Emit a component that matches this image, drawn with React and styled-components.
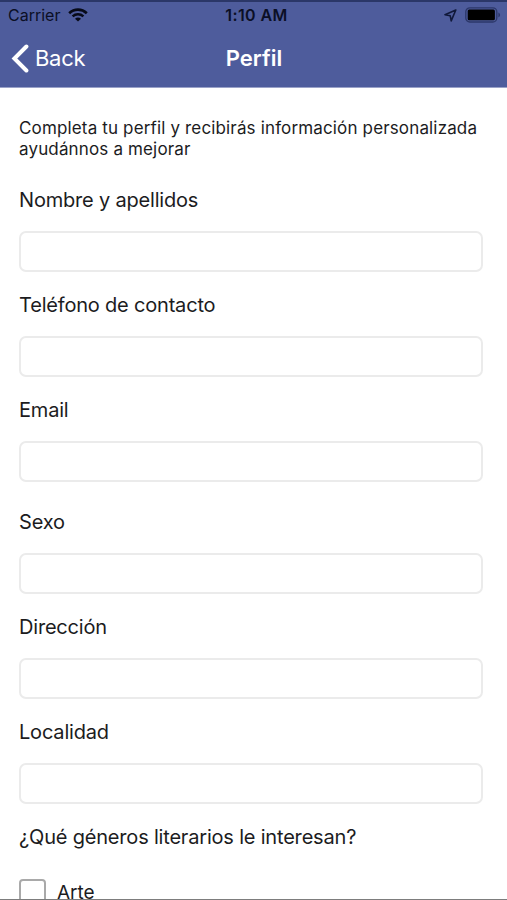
import React from 'react';
import styled, { createGlobalStyle } from 'styled-components';

const GlobalStyle = createGlobalStyle`
  body {
    margin: 0;
    background: #fff;
    font-family: Inter, 'Liberation Sans', sans-serif;
    color: #1c1c1e;
  }
`;

const Screen = styled.div`
  box-sizing: border-box;
  width: 507px;
  height: 900px;
  overflow: hidden;
  border-bottom: 1px solid #7d7d7d;
`;

const Header = styled.header`
  box-sizing: border-box;
  height: 88px;
  background-color: #4e5c9c;
  border-top: 2px solid #2b3768;
  border-bottom: 1px solid #9aa2c8;
`;

const StatusBar = styled.div`
  display: grid;
  grid-template-columns: 1fr auto 1fr;
  align-items: center;
  height: 26px;
  padding: 0 6px 0 8px;
  color: #0b0f25;
`;

const StatusGroup = styled.div`
  display: flex;
  align-items: center;
  justify-content: ${(props) => (props.$end ? 'flex-end' : 'flex-start')};
  gap: 8px;
`;

const Carrier = styled.span`
  font-size: 16px;
`;

const Time = styled.span`
  padding-left: 4px;
  font-size: 16px;
  font-weight: 600;
  letter-spacing: 0.4px;
`;

const NavBar = styled.nav`
  display: grid;
  grid-template-columns: 1fr auto 1fr;
  align-items: center;
  height: 60px;
  padding: 0 10px 0 11px;
  color: #fff;
`;

const BackButton = styled.button`
  display: flex;
  align-items: center;
  gap: 6px;
  padding: 0;
  border: 0;
  background: none;
  color: inherit;
  font: inherit;
  font-size: 22px;
  line-height: 28px;
  letter-spacing: -0.3px;
`;

const Title = styled.h1`
  margin: 0;
  font-size: 22px;
  font-weight: 600;
  line-height: 28px;
`;

const Form = styled.form`
  padding: 30px 24px 0 19px;
`;

const Intro = styled.p`
  margin: 0 0 29px;
  font-size: 17px;
  line-height: 20.5px;
  letter-spacing: 0.15px;
  white-space: nowrap;
`;

const Label = styled.label`
  display: block;
  font-size: 20px;
  line-height: 24px;
  letter-spacing: -0.19px;
  white-space: nowrap;
`;

const Field = styled.div`
  margin-bottom: ${(props) => (props.$spaced ? '28px' : '21px')};
`;

const Input = styled.input`
  box-sizing: border-box;
  display: block;
  width: 100%;
  height: 41px;
  margin-top: 19px;
  padding: 0 10px;
  border: 2px solid #ebebeb;
  border-radius: 7px;
  background: #fff;
  font: inherit;
  outline: none;
`;

const Option = styled.label`
  display: flex;
  align-items: flex-start;
  gap: 11px;
  margin-top: 30px;
  font-size: 19px;
  line-height: 28px;
`;

const Checkbox = styled.input`
  appearance: none;
  box-sizing: border-box;
  width: 27px;
  height: 27px;
  margin: 0;
  border: 2px solid #a9a9a9;
  border-radius: 4px;
`;

const WifiIcon = () => (
  <svg width="20" height="14" viewBox="0 0 20 14" fill="none" stroke="#070a18">
    <path d="M1.2 5.2C6.2 0.5 13.8 0.5 18.8 5.2" strokeWidth="2.7" />
    <path d="M4.6 8.4C7.7 5.6 12.3 5.6 15.4 8.4" strokeWidth="2.5" />
    <path d="M10 13.5L7 10.7C8.7 9.2 11.3 9.2 13 10.7Z" fill="#070a18" stroke="none" />
  </svg>
);

const LocationIcon = () => (
  <svg width="13" height="13" viewBox="0 0 13 13" fill="none" stroke="#10183a" strokeWidth="1.6" strokeLinejoin="round">
    <path d="M11.8 1L1 5.8L6.2 6.7L7.2 11.9Z" />
  </svg>
);

const BatteryIcon = () => (
  <svg width="36" height="16" viewBox="0 0 36 16">
    <rect x="0.8" y="0.8" width="31" height="14.2" rx="4" fill="none" stroke="#2c3769" strokeWidth="1.3" />
    <rect x="2.7" y="2.6" width="27.2" height="10.6" rx="1.5" fill="#000" />
    <path d="M33.4 5.5C35.6 6.2 35.6 9.6 33.4 10.3Z" fill="#2c3769" />
  </svg>
);

const BackIcon = () => (
  <svg width="18" height="29" viewBox="0 0 18 29" fill="none" stroke="#fff" strokeWidth="4" strokeLinecap="round" strokeLinejoin="miter">
    <path d="M15.4 2.5L3.4 14.5L15.4 26.5" />
  </svg>
);

const fields = [
  { id: 'nombre', label: 'Nombre y apellidos' },
  { id: 'telefono', label: 'Teléfono de contacto' },
  { id: 'email', label: 'Email', spaced: true },
  { id: 'sexo', label: 'Sexo' },
  { id: 'direccion', label: 'Dirección' },
  { id: 'localidad', label: 'Localidad' },
];

const App = () => (
  <Screen>
    <GlobalStyle />
    <Header>
      <StatusBar>
        <StatusGroup>
          <Carrier>Carrier</Carrier>
          <WifiIcon />
        </StatusGroup>
        <Time>1:10 AM</Time>
        <StatusGroup $end>
          <LocationIcon />
          <BatteryIcon />
        </StatusGroup>
      </StatusBar>
      <NavBar>
        <BackButton type="button">
          <BackIcon />
          Back
        </BackButton>
        <Title>Perfil</Title>
      </NavBar>
    </Header>
    <Form>
      <Intro>
        Completa tu perfil y recibirás información personalizada
        <br />
        ayudánnos a mejorar
      </Intro>
      {fields.map((field) => (
        <Field key={field.id} $spaced={field.spaced}>
          <Label htmlFor={field.id}>{field.label}</Label>
          <Input id={field.id} type="text" />
        </Field>
      ))}
      <Label as="div">¿Qué géneros literarios le interesan?</Label>
      <Option>
        <Checkbox type="checkbox" />
        Arte
      </Option>
    </Form>
  </Screen>
);

export default App;
